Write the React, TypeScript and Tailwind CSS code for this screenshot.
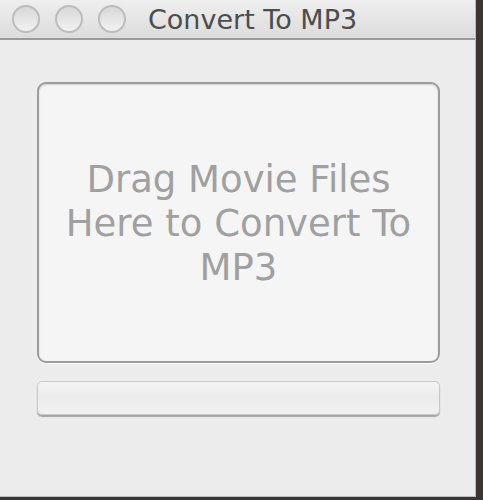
export default function App() {
  const lights = [0, 1, 2]

  return (
    <div className="h-[500px] w-[483px] bg-[#3a3530] overflow-hidden" style={{ fontFamily: '"DejaVu Sans", "Liberation Sans", sans-serif' }}>
      <div className="flex h-[497px] w-[476px] flex-col bg-[#ececec] border-r border-b border-[#bdbdbd]">
        {/* title bar */}
        <div className="flex h-[40px] items-center border-b-2 border-[#9a9a9a] bg-gradient-to-b from-[#efefef] to-[#dcdcdc] pl-[12px]">
          <div className="flex gap-[15px]">
            {lights.map((i) => (
              <div
                key={i}
                className="h-[28px] w-[28px] rounded-full border-2 border-[#bcbcbc] bg-gradient-to-b from-[#d8d8d8] to-[#f2f2f2]"
              />
            ))}
          </div>
          <span className="ml-[22px] text-[27px] leading-none text-[#4d4d4d]">Convert To MP3</span>
        </div>

        {/* content */}
        <div className="flex flex-col gap-[18px] pl-[37px] pt-[42px]">
          <div className="flex h-[281px] w-[403px] items-center justify-center rounded-[9px] border-2 border-[#9c9c9c] bg-[#f5f5f5] shadow-[inset_0_1px_2px_rgba(0,0,0,0.15),0_1px_0_#ffffff]">
            <p className="text-center text-[37px] leading-[44px] text-[#a0a0a0] pt-[2px]">
              Drag Movie Files
              <br />
              Here to Convert To
              <br />
              MP3
            </p>
          </div>
          <div className="h-[34px] w-[403px] rounded-[5px] border border-[#c9c9c9] bg-gradient-to-b from-[#f4f4f4] via-[#ececec] to-[#f1f1f1] shadow-[0_2px_1px_rgba(0,0,0,0.3)]" />
        </div>
      </div>
    </div>
  )
}
